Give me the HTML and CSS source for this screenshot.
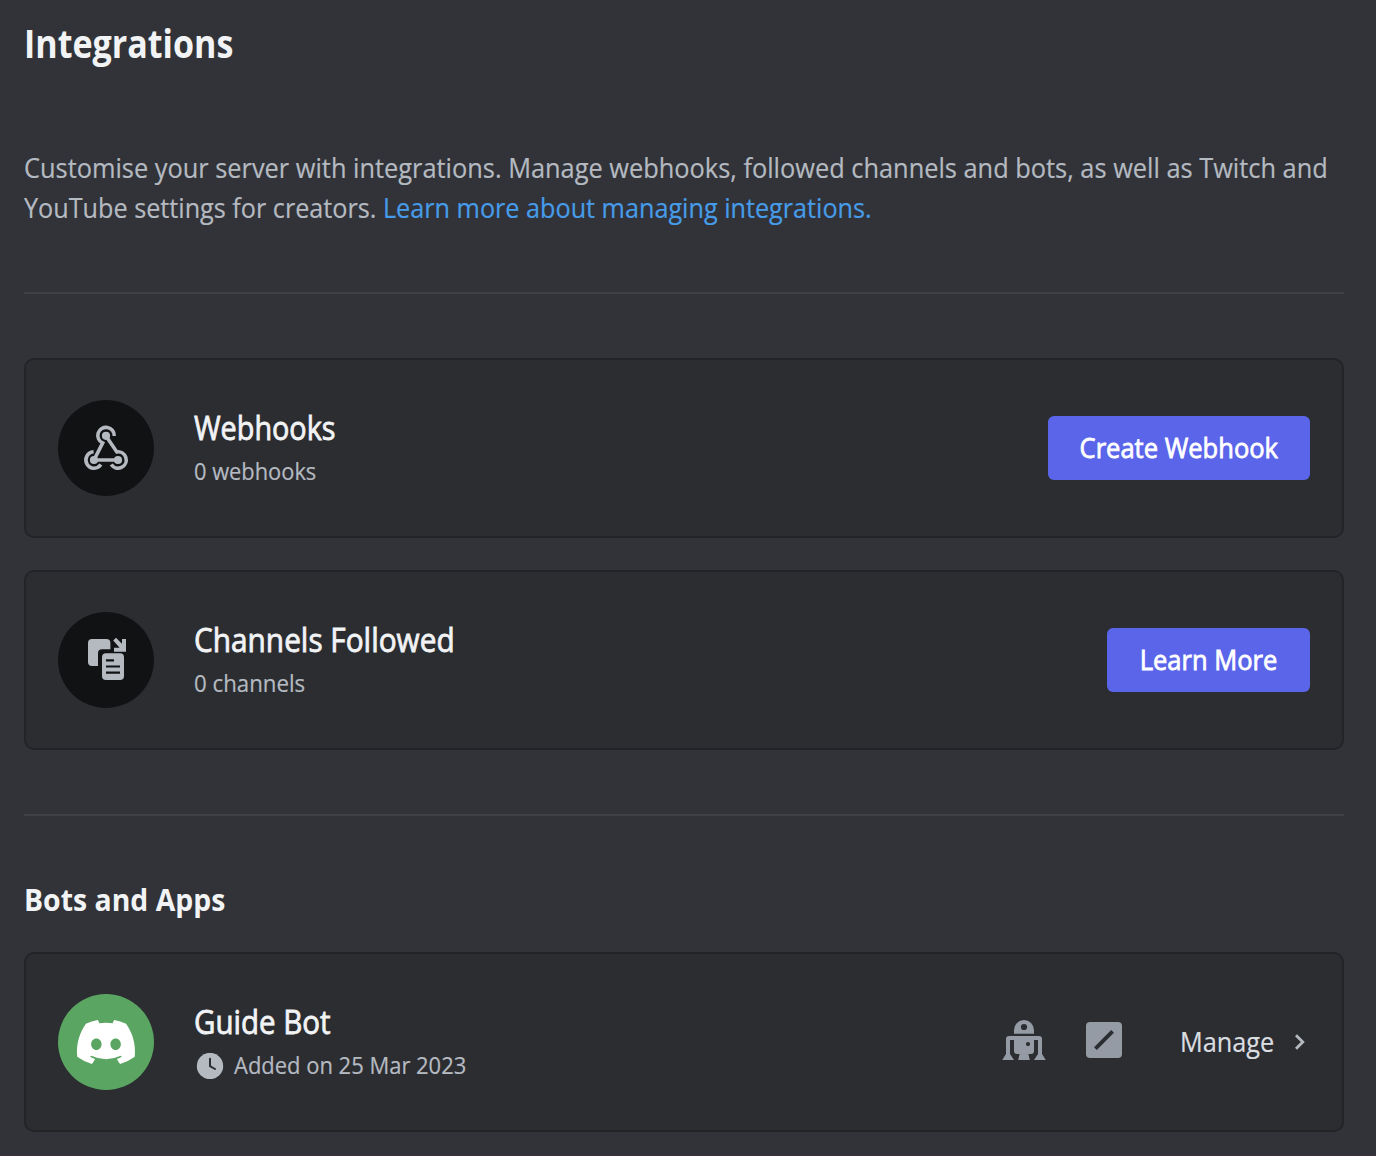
FILE: index.html
```
<!DOCTYPE html>
<html lang="en-GB">
<head>
<meta charset="utf-8">
<title>Integrations</title>
<link rel="stylesheet" href="styles.css">
</head>
<body>
<main class="page">
  <h1 class="title"><span class="fit fit-title">Integrations</span></h1>
  <p class="intro"><span class="fit fit-line-one">Customise your server with integrations. Manage webhooks, followed channels and bots, as well as Twitch and</span> <br><span class="fit fit-line-two">YouTube settings for creators. <a class="link" href="#">Learn more about managing integrations.</a></span></p>
  <hr class="divider">
  <section class="cards">
    <article class="card">
      <svg class="avatar" viewBox="0 0 96 96">
        <circle cx="48" cy="48" r="48" fill="#111214"/>
        <g fill="none" stroke="#b5bac1" stroke-width="3.6">
          <path d="M56.2 36A8.2 8.2 0 1 0 44.6 43L36 60H60"/>
          <path d="M48 36L58.8 51.9A8.2 8.2 0 1 1 53.2 64.6"/>
          <path d="M35.6 51.8A8.2 8.2 0 1 0 42.9 64.6"/>
        </g>
        <g fill="#b5bac1"><circle cx="48" cy="35.8" r="4.1"/><circle cx="36" cy="60" r="4.1"/><circle cx="60" cy="60" r="4.1"/></g>
      </svg>
      <div class="info">
        <h3 class="name"><span class="fit fit-webhooks">Webhooks</span></h3>
        <div class="meta"><span class="fit fit-webhook-count">0 webhooks</span></div>
      </div>
      <button class="button button-create"><span class="fit">Create Webhook</span></button>
    </article>
    <article class="card">
      <svg class="avatar" viewBox="0 0 96 96">
        <circle cx="48" cy="48" r="48" fill="#111214"/>
        <g fill="#b5bac1">
          <path d="M34 27H48.4A4 4 0 0 1 52.4 31V37.3H44A4 4 0 0 0 40 41.3V54H34A4 4 0 0 1 30 50V31A4 4 0 0 1 34 27Z"/>
          <rect x="44" y="41.3" width="22" height="26.7" rx="4"/>
          <path d="M58 25.8L64 31.8V27H68V39.7H56V35.7H61.6L55.2 28.6Z"/>
        </g>
        <path d="M48 48.3H56M48 54.5H62M48 60.6H62" stroke="#111214" stroke-width="2.2"/>
      </svg>
      <div class="info">
        <h3 class="name"><span class="fit fit-channels">Channels Followed</span></h3>
        <div class="meta"><span class="fit fit-channel-count">0 channels</span></div>
      </div>
      <button class="button button-learn"><span class="fit">Learn More</span></button>
    </article>
  </section>
  <hr class="divider">
  <h2 class="subtitle"><span class="fit fit-subtitle">Bots and Apps</span></h2>
  <article class="card">
    <svg class="avatar" viewBox="0 0 96 96">
      <circle cx="48" cy="48" r="48" fill="#5ba563"/>
      <path transform="translate(19 26.1) scale(.4562)" fill="#fff" d="M107.7,8.07A105.15,105.15,0,0,0,81.47,0a72.06,72.06,0,0,0-3.36,6.83A97.68,97.68,0,0,0,49,6.83,72.37,72.37,0,0,0,45.64,0,105.89,105.89,0,0,0,19.39,8.09C2.79,32.65-1.71,56.6.54,80.21h0A105.73,105.73,0,0,0,32.71,96.36,77.7,77.7,0,0,0,39.6,85.25a68.42,68.42,0,0,1-10.85-5.18c.91-.66,1.8-1.34,2.66-2a75.57,75.57,0,0,0,64.32,0c.87.71,1.76,1.39,2.66,2a68.68,68.68,0,0,1-10.87,5.19,77,77,0,0,0,6.89,11.1A105.25,105.25,0,0,0,126.6,80.22h0C129.24,52.84,122.09,29.11,107.7,8.07ZM42.45,65.69C36.18,65.69,31,60,31,53s5-12.74,11.43-12.74S54,46,53.89,53,48.84,65.69,42.45,65.69Zm42.24,0C78.41,65.69,73.25,60,73.25,53s5-12.74,11.44-12.74S96.23,46,96.12,53,91.08,65.69,84.69,65.69Z"/>
    </svg>
    <div class="info">
      <h3 class="name"><span class="fit fit-bot">Guide Bot</span></h3>
      <div class="meta">
        <svg class="clock" viewBox="0 0 32 26"><circle cx="16" cy="13" r="13.2" fill="#b5bac1"/><path d="M16 5.8V13.2L21 16" fill="none" stroke="#2b2d31" stroke-width="2" stroke-linecap="round" stroke-linejoin="round"/></svg>
        <span class="fit fit-added">Added on 25 Mar 2023</span>
      </div>
    </div>
    <div class="actions">
      <svg class="robot" viewBox="12 9 44 42" fill="#949ba4" fill-rule="evenodd">
        <path d="M24 23.8V20A10 10 0 0 1 44 20V23.8ZM34 13.9A3.1 3.1 0 1 0 34 20.1A3.1 3.1 0 1 0 34 13.9Z"/>
        <path d="M19 26H49A3 3 0 0 1 52 29V44L55.8 50H44L48 44V30H44V41A3 3 0 0 1 41 44H38.4L39.8 50H28.2L29.6 44H27A3 3 0 0 1 24 41V30H20V44L24 50H12.2L16 44V29A3 3 0 0 1 19 26ZM38 32A2.1 2.1 0 1 0 38 36.2A2.1 2.1 0 1 0 38 32Z"/>
      </svg>
      <svg class="slash" viewBox="0 0 36 36"><rect width="36" height="36" rx="4" fill="#949ba4"/><path d="M9.4 26.6L26.6 9.4" stroke="#2b2d31" stroke-width="3.8"/></svg>
      <span class="manage"><span class="fit fit-manage">Manage</span></span>
      <svg class="chevron" viewBox="0 0 12 18"><path d="M2 2.2L8.8 9L2 15.8" fill="none" stroke="#b5bac1" stroke-width="2.8"/></svg>
    </div>
  </article>
</main>
</body>
</html>
```
FILE: styles.css
```
* { box-sizing: border-box; }
body {
  margin: 0;
  background: #313338;
  color: #f2f3f5;
  font-family: "Open Sans", "Noto Sans", sans-serif;
}
.page {
  display: flex;
  flex-direction: column;
  height: 1156px;
  padding: 19px 32px 0 24px;
  border-bottom: 1px solid #3a313a;
}

/* Slightly condensed lettering, tuned per label */
.fit { display: inline-block; transform: scaleX(.912); transform-origin: left center; white-space: nowrap; }
.fit-title { transform: scaleX(.873); }
.fit-line-one { transform: scaleX(.906); }
.fit-line-two { transform: scaleX(.9); }
.fit-webhooks { transform: scaleX(.9); }
.fit-webhook-count { transform: scaleX(.91); }
.fit-channels { transform: scaleX(.931); }
.fit-channel-count { transform: scaleX(.927); }
.fit-subtitle { transform: scaleX(.916); }
.fit-bot { transform: scaleX(.922); }
.fit-added { transform: scaleX(.915); }
.fit-manage { transform: scaleX(.903); }

.title { margin: 0; font-size: 39px; line-height: 48px; height: 48px; font-weight: 700; }
.intro {
  margin: 80px 0 65px;
  font-size: 28px;
  line-height: 40px;
  height: 80px;
  color: #b5bac1;
  white-space: nowrap;
  overflow: hidden;
  -webkit-text-stroke: .2px;
}
.link { color: #479ce9; text-decoration: none; }
.divider { width: 100%; height: 2px; margin: 0; border: 0; background: #3f4147; }
.cards { display: flex; flex-direction: column; gap: 32px; margin: 64px 0; }
.card {
  display: flex;
  align-items: center;
  height: 180px;
  padding: 0 32px;
  border: 2px solid #232428;
  border-radius: 10px;
  background: #2b2d31;
}
.avatar { width: 96px; height: 96px; margin-right: 40px; flex: none; }
.info { flex: 1; padding: 4px 0 1px; white-space: nowrap; }
.name { margin: 0 0 3px; font-size: 32px; line-height: 40px; height: 40px; font-weight: 400; -webkit-text-stroke: .8px; }
.meta { display: flex; align-items: center; height: 40px; font-size: 24px; line-height: 40px; color: #b5bac1; -webkit-text-stroke: .2px; }
.clock { width: 32px; height: 26px; margin: 2px 8px 0 0; }
.button {
  display: flex;
  align-items: center;
  justify-content: center;
  height: 64px;
  padding: 0 0 2px;
  border: 0;
  border-radius: 6px;
  background: #5a65ea;
  color: #fff;
  font: inherit;
  font-size: 28px;
  -webkit-text-stroke: .8px;
}
.button .fit { transform-origin: center; }
.button-create { width: 262px; }
.button-learn { width: 203px; }
.subtitle { margin: 63px 0 33px; font-size: 31px; line-height: 40px; height: 40px; font-weight: 700; }
.actions { display: flex; align-items: center; }
.robot { width: 44px; height: 42px; margin: -4px 40px 0 0; }
.slash { width: 36px; height: 36px; margin: -4px 58px 0 0; }
.manage { width: 94px; margin-top: -2px; font-size: 28px; line-height: 40px; color: #dbdee1; -webkit-text-stroke: .2px; }
.chevron { width: 12px; height: 18px; margin: 0 4px 0 20px; }
```
